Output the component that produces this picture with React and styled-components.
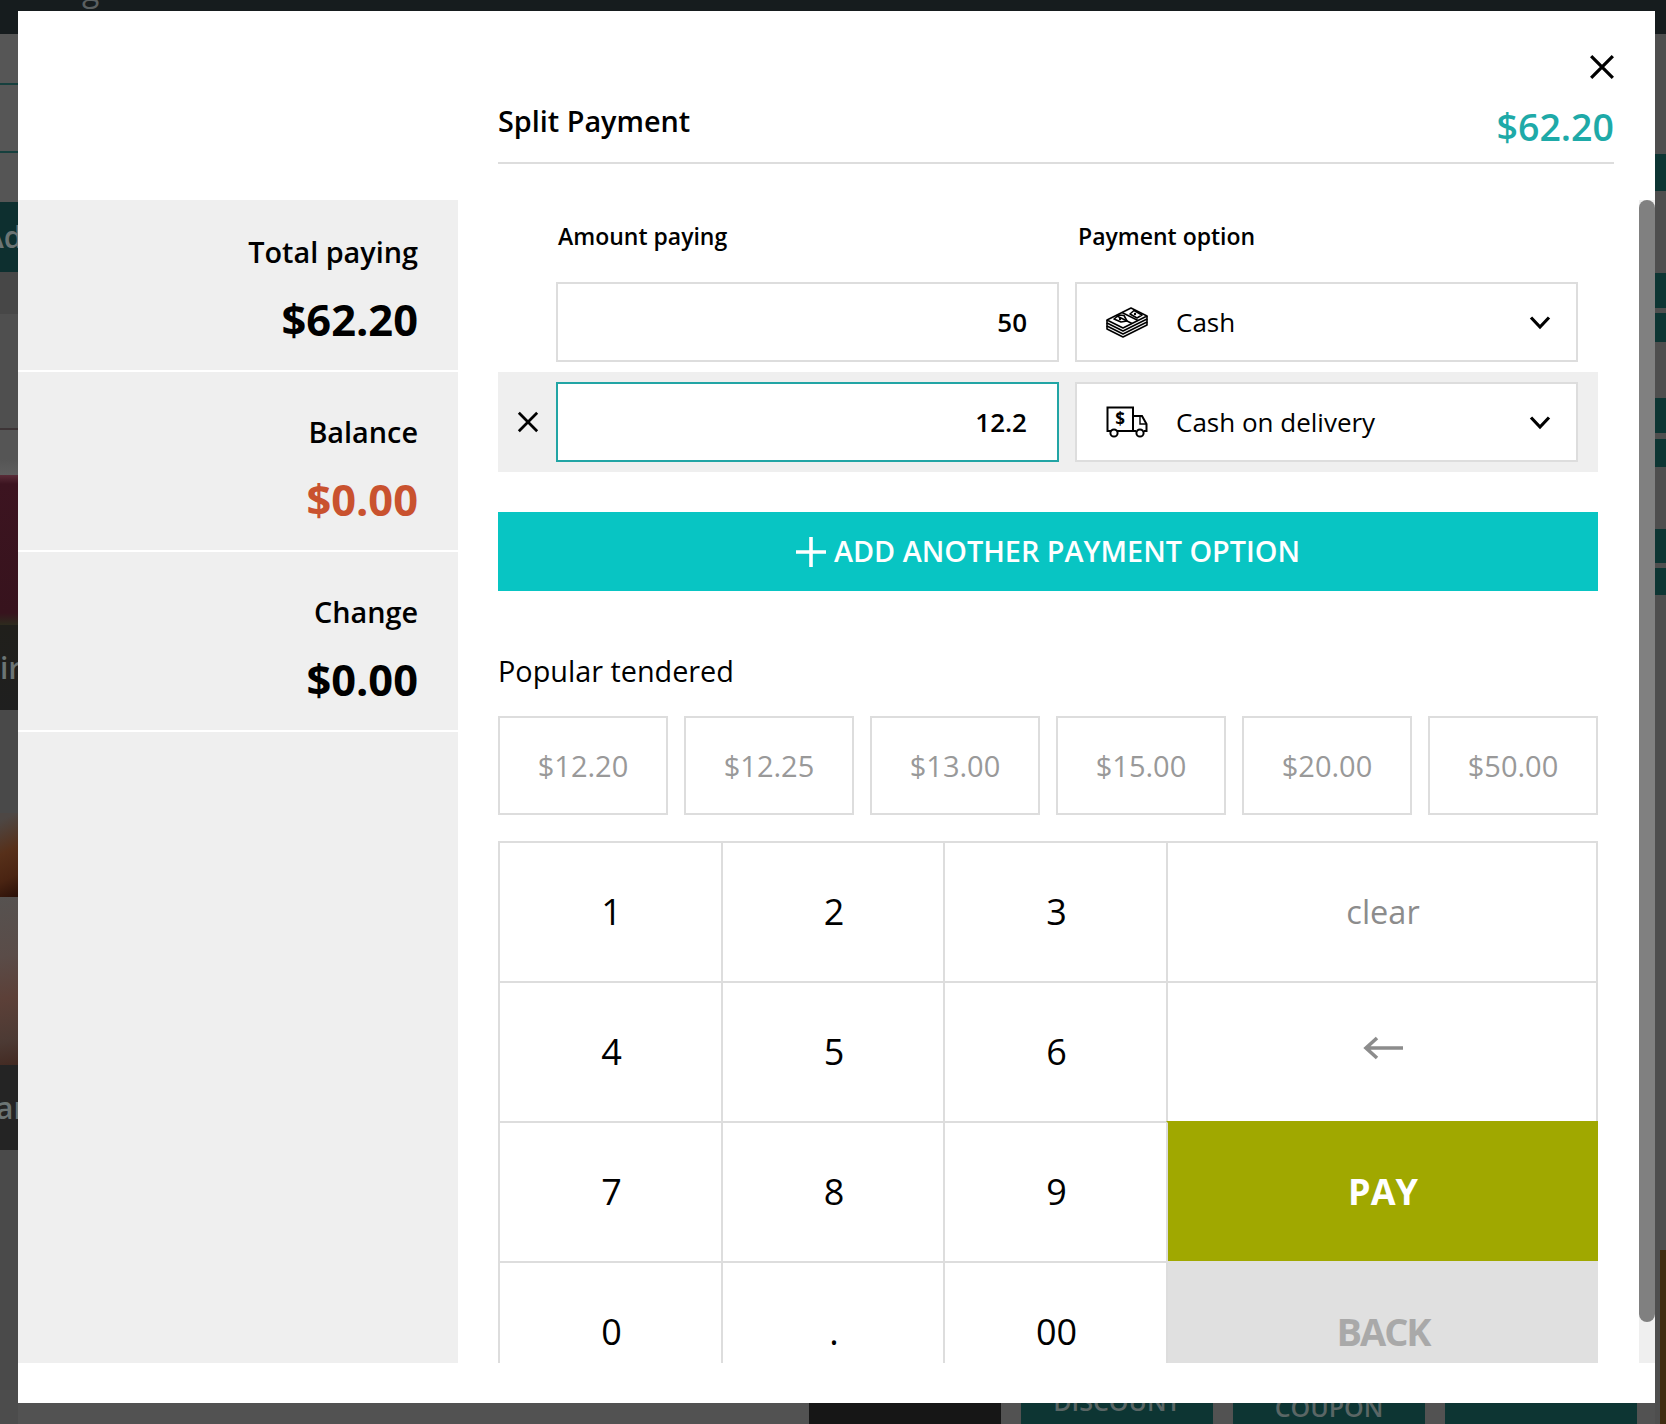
import React from "react";
import styled, { createGlobalStyle } from "styled-components";

const Global = createGlobalStyle`
  html, body { margin: 0; padding: 0; background: #4c4c4c; }
  body { font-family: "Open Sans", "Liberation Sans", sans-serif; color: #000; }
  * { box-sizing: border-box; }
`;

const Page = styled.div`
  position: relative;
  width: 1666px;
  height: 1424px;
  overflow: hidden;
  display: grid;
  grid-template-columns: 18px 1fr 11px;
  grid-template-rows: 34px 1fr 50px;
  background: #4c4c4c;
`;
const TopBar = styled.div`
  grid-column: 1 / -1;
  background: #161c1e;
  overflow: hidden;
  padding-left: 82px;
`;
const TopText = styled.div`
  margin-top: -27px;
  font-size: 32px;
  line-height: 32px;
  color: #5a5f60;
`;
const LeftRail = styled.div`
  grid-column: 1;
  grid-row: 2 / 4;
  display: flex;
  flex-direction: column;
  overflow: hidden;
`;
const RailBlock = styled.div`
  height: ${(p) => p.$h}px;
  flex: none;
  background: ${(p) => p.$bg};
  border-top: ${(p) => (p.$line ? `2px solid ${p.$line}` : "none")};
  color: #6b7474;
  font-size: 30px;
  font-weight: 600;
  line-height: ${(p) => p.$h}px;
  white-space: nowrap;
  text-indent: ${(p) => p.$indent || 0}px;
  overflow: hidden;
`;
const Middle = styled.div`
  grid-column: 2;
  grid-row: 2;
`;
const RightRail = styled.div`
  grid-column: 3;
  grid-row: 2 / 4;
  display: flex;
  flex-direction: column;
  background: #4e4e4e;
`;
const RightStripe = styled.div`
  height: ${(p) => p.$h}px;
  flex: none;
  margin-top: ${(p) => p.$gap}px;
  background: #0d3533;
`;
const Sliver = styled.div`
  flex: 1;
  margin-top: ${(p) => p.$gap}px;
  margin-left: 5px;
  background: #3f2c10;
`;
const BottomBar = styled.div`
  grid-column: 2;
  grid-row: 3;
  display: flex;
  gap: 20px;
  background: #525252;
  padding-left: 791px;
`;
const BottomTile = styled.div`
  width: 192px;
  background: ${(p) => p.$bg};
  color: #5a6665;
  font-size: 25px;
  font-weight: 600;
  line-height: 30px;
  text-align: center;
  padding-top: ${(p) => p.$top}px;
`;

const Modal = styled.div`
  position: absolute;
  left: 18px;
  top: 11px;
  width: 1637px;
  height: 1392px;
  background: #fff;
  display: grid;
  grid-template-columns: 440px 1fr;
`;
const CloseButton = styled.button`
  position: absolute;
  left: 1571px;
  top: 43px;
  width: 26px;
  height: 26px;
  padding: 0;
  border: 0;
  background: none;
  display: flex;
`;
const Summary = styled.aside`
  margin: 189px 0 40px;
  background: #efefef;
  display: flex;
  flex-direction: column;
`;
const SummaryBlock = styled.div`
  height: 180px;
  border-bottom: 2px solid #fff;
  padding: 41px 40px 0 0;
  text-align: right;
  &:first-child { height: 172px; padding-top: 33px; }
`;
const SummaryLabel = styled.div`
  font-size: 28.8px;
  font-weight: 600;
  line-height: 38px;
`;
const SummaryValue = styled.div`
  margin-top: 20px;
  font-size: 43.4px;
  font-weight: 700;
  line-height: 58px;
  color: ${(p) => p.$color || "#000"};
`;
const Pane = styled.section`
  padding-left: 40px;
  display: flex;
  flex-direction: column;
  min-width: 0;
`;
const Header = styled.header`
  width: 1116px;
  height: 153px;
  border-bottom: 2px solid #ddd;
  display: flex;
  justify-content: space-between;
  align-items: flex-end;
  padding-bottom: 7px;
`;
const Title = styled.h1`
  margin: 0 0 15px;
  font-size: 28.8px;
  font-weight: 600;
  line-height: 38px;
`;
const HeaderTotal = styled.div`
  margin-bottom: 3px;
  font-size: 37.5px;
  font-weight: 600;
  line-height: 50px;
  color: #1eaaa8;
`;
const Scroller = styled.div`
  margin-top: 36px;
  height: 1163px;
  display: flex;
  gap: 41px;
  overflow: hidden;
`;
const ScrollContent = styled.div`
  width: 1100px;
  flex: none;
`;
const ScrollTrack = styled.div`
  width: 16px;
  background: #efefef;
`;
const ScrollThumb = styled.div`
  height: 1122px;
  background: #808080;
  border-radius: 8px;
`;
const LabelRow = styled.div`
  height: 72px;
  display: grid;
  grid-template-columns: 503px 504px;
  column-gap: 16px;
  padding: 0 0 0 58px;
  align-items: center;
`;
const FieldLabel = styled.div`
  font-size: 23px;
  font-weight: 600;
  line-height: 72px;
  padding-left: ${(p) => p.$indent}px;
`;
const PayRow = styled.div`
  height: 100px;
  display: grid;
  grid-template-columns: 58px 503px 519px;
  column-gap: 0;
  align-items: center;
  background: ${(p) => (p.$active ? "#efefef" : "transparent")};
`;
const RemoveButton = styled.button`
  width: 58px;
  height: 58px;
  padding: 0 0 0 2px;
  border: 0;
  background: none;
  display: flex;
  align-items: center;
  justify-content: center;
`;
const AmountField = styled.div`
  grid-column: 2;
  height: 80px;
  background: #fff;
  border: 2px solid ${(p) => (p.$focus ? "#22a5a5" : "#ddd")};
  padding-right: 30px;
  display: flex;
  align-items: center;
  justify-content: flex-end;
  font-size: 26px;
  font-weight: 600;
`;
const SelectField = styled.div`
  margin-left: 16px;
  height: 80px;
  background: #fff;
  border: 2px solid #ddd;
  display: flex;
  align-items: center;
  padding: 0 25px 0 29px;
  font-size: 26px;
`;
const SelectIcon = styled.svg`
  width: 42px;
  height: 32px;
  flex: none;
  margin-right: 28px;
`;
const SelectText = styled.span`
  flex: 1;
`;
const AddButton = styled.button`
  display: flex;
  width: 100%;
  height: 79px;
  margin-top: 40px;
  border: 0;
  padding: 0;
  background: #08c5c3;
  color: #fff;
  font: 600 28.8px/1 "Open Sans", sans-serif;
  align-items: center;
  justify-content: center;
  gap: 8px;
`;
const SectionTitle = styled.h2`
  margin: 60px 0 25px;
  font-size: 28.8px;
  font-weight: 400;
  line-height: 40px;
`;
const Chips = styled.div`
  display: grid;
  grid-template-columns: repeat(6, 170px);
  column-gap: 16px;
`;
const Chip = styled.button`
  height: 99px;
  padding: 0;
  background: #fff;
  border: 2px solid #ddd;
  color: #999;
  font: 400 29px/1 "Open Sans", sans-serif;
`;
const Keypad = styled.div`
  margin-top: 26px;
  display: grid;
  grid-template-columns: 223px 222px 223px 432px;
  grid-auto-rows: 140px;
`;
const Key = styled.button`
  padding: 0 0 2px ${(p) => (p.$bg ? 0 : 2)}px;
  background: ${(p) => p.$bg || "#fff"};
  background-clip: padding-box;
  border: 0;
  border-top: 2px solid ${(p) => p.$bg || "#ddd"};
  border-left: 2px solid #ddd;
  border-right: ${(p) => (p.$end ? "2px solid #ddd" : "0")};
  color: ${(p) => p.$color || "#000"};
  font-family: "Open Sans", sans-serif;
  font-size: ${(p) => p.$size || 36}px;
  font-weight: ${(p) => p.$weight || 400};
  letter-spacing: ${(p) => p.$track || 0}px;
  display: flex;
  align-items: center;
  justify-content: center;
`;
const BackArrow = styled.svg`
  margin-bottom: 6px;
`;

const Cross = ({ size, w = 2.4 }) => (
  <svg width={size} height={size} viewBox="0 0 24 24" fill="none" stroke="#000" strokeWidth={w}>
    <path d="M2 2 L22 22 M22 2 L2 22" />
  </svg>
);
const Chevron = () => (
  <svg width="22" height="15" viewBox="0 0 22 15" fill="none" stroke="#000" strokeWidth="3.2">
    <path d="M2 2.5 L11 12 L20 2.5" />
  </svg>
);
const MoneyIcon = () => (
  <SelectIcon viewBox="0 0 42 32" fill="none" stroke="#000" strokeWidth="1.6" strokeLinejoin="round">
    <path d="M1 14 L25 2 L41 10 L17 22 Z" fill="#fff" />
    <path d="M1 14 V17 L17 25 L41 13 V10" />
    <path d="M1 17 V20 L17 28 L41 16 V13" />
    <path d="M1 20 V23 L17 31 L41 19 V16" />
    <path d="M10 9.5 L26 17.5 M16 6.5 L32 14.5" strokeWidth="1.4" />
    <path d="M13 9 L18 9.5 L21 15 L15 16 L8 13 Z" />
    <path d="M28 4.5 L36 9 L31 12 L24 8 Z" />
    <circle cx="14" cy="13" r="1.2" fill="#000" stroke="none" />
    <circle cx="29" cy="8" r="1.2" fill="#000" stroke="none" />
  </SelectIcon>
);
const TruckIcon = () => (
  <SelectIcon viewBox="0 0 42 32" fill="none" stroke="#000" strokeWidth="2">
    <path d="M5 25 H1.5 V1.5 H27 V25 H11" />
    <path d="M27 10 H36 L40.5 18 V25 H38" />
    <path d="M30 25 H27" />
    <path d="M34 10 L34 18 H40.5" strokeWidth="1.4" />
    <circle cx="8" cy="27" r="3.6" />
    <circle cx="34" cy="27" r="3.6" />
    <text x="14" y="19" fontSize="17" fontWeight="700" fontFamily="Open Sans" textAnchor="middle" fill="#000" stroke="none">$</text>
  </SelectIcon>
);

const summary = [
  { label: "Total paying", value: "$62.20" },
  { label: "Balance", value: "$0.00", color: "#c9522f" },
  { label: "Change", value: "$0.00" },
];
const tendered = ["$12.20", "$12.25", "$13.00", "$15.00", "$20.00", "$50.00"];
const digits = [["1", "2", "3"], ["4", "5", "6"], ["7", "8", "9"], ["0", ".", "00"]];

const leftRail = [
  { h: 49, bg: "#565656" },
  { h: 68, bg: "#565656", line: "#16403e" },
  { h: 51, bg: "#555555", line: "#16403e" },
  { h: 70, bg: "#0d2f2f", text: "Ad", indent: -16 },
  { h: 42, bg: "#474747" },
  { h: 161, bg: "linear-gradient(#4f4f4f 0 71%, #3d3436 71% 72%, #555 72% 90%, #5e5e5e)" },
  { h: 150, bg: "linear-gradient(#5a2c38, #3c1420 6%, #37131d 92%, #2d2b1e)" },
  { h: 85, bg: "linear-gradient(#201f1b, #1f1f1f)", text: "ir", indent: 0 },
  { h: 103, bg: "#494949" },
  { h: 84, bg: "linear-gradient(155deg, #4d4744 8%, #57301a 45%, #4a2412 75%, #2a1008)" },
  { h: 168, bg: "linear-gradient(170deg, #565250, #5a4c48 35%, #5c4038 60%, #4c3a34 85%, #432a22)" },
  { h: 85, bg: "#242424", text: "ar", indent: -4 },
  { h: 240, bg: "#4a4a4a" },
];
const stripes = [
  { top: 120, h: 37 },
  { top: 82, h: 35 },
  { top: 5, h: 29 },
  { top: 56, h: 35 },
  { top: 6, h: 28 },
  { top: 62, h: 34 },
  { top: 5, h: 27 },
];

export default function App() {
  return (
    <Page>
      <Global />
      <TopBar>
        <TopText>g</TopText>
      </TopBar>
      <LeftRail>
        {leftRail.map((b, i) => (
          <RailBlock key={i} $h={b.h} $bg={b.bg} $line={b.line} $indent={b.indent}>
            {b.text}
          </RailBlock>
        ))}
      </LeftRail>
      <Middle />
      <RightRail>
        {stripes.map((s, i) => (
          <RightStripe key={i} $gap={s.top} $h={s.h} />
        ))}
        <Sliver $gap={655} />
      </RightRail>
      <BottomBar>
        <BottomTile $bg="#161616" />
        <BottomTile $bg="#0d3533" $top={12}>DISCOUNT</BottomTile>
        <BottomTile $bg="#0d3533" $top={18}>COUPON</BottomTile>
        <BottomTile $bg="#0d3533" />
      </BottomBar>

      <Modal>
        <CloseButton aria-label="Close">
          <Cross size={26} w={3} />
        </CloseButton>
        <Summary>
          {summary.map((s) => (
            <SummaryBlock key={s.label}>
              <SummaryLabel>{s.label}</SummaryLabel>
              <SummaryValue $color={s.color}>{s.value}</SummaryValue>
            </SummaryBlock>
          ))}
        </Summary>
        <Pane>
          <Header>
            <Title>Split Payment</Title>
            <HeaderTotal>$62.20</HeaderTotal>
          </Header>
          <Scroller>
            <ScrollContent>
              <LabelRow>
                <FieldLabel $indent={2}>Amount paying</FieldLabel>
                <FieldLabel $indent={3}>Payment option</FieldLabel>
              </LabelRow>
              <PayRow>
                <AmountField>50</AmountField>
                <SelectField>
                  <MoneyIcon />
                  <SelectText>Cash</SelectText>
                  <Chevron />
                </SelectField>
              </PayRow>
              <PayRow $active>
                <RemoveButton aria-label="Remove">
                  <Cross size={22} w={3} />
                </RemoveButton>
                <AmountField $focus>12.2</AmountField>
                <SelectField>
                  <TruckIcon />
                  <SelectText>Cash on delivery</SelectText>
                  <Chevron />
                </SelectField>
              </PayRow>
              <AddButton>
                <svg width="30" height="30" viewBox="0 0 30 30" stroke="#fff" strokeWidth="3.6">
                  <path d="M15 0 V30 M0 15 H30" />
                </svg>
                ADD ANOTHER PAYMENT OPTION
              </AddButton>
              <SectionTitle>Popular tendered</SectionTitle>
              <Chips>
                {tendered.map((t) => (
                  <Chip key={t}>{t}</Chip>
                ))}
              </Chips>
              <Keypad>
                {digits[0].map((d) => <Key key={d}>{d}</Key>)}
                <Key $end $color="#8c8c8c" $size={32.5}>clear</Key>
                {digits[1].map((d) => <Key key={d}>{d}</Key>)}
                <Key $end aria-label="Backspace">
                  <BackArrow width="42" height="26" viewBox="0 0 42 26" fill="none" stroke="#8c8c8c" strokeWidth="3.6">
                    <path d="M41 13 H4 M15 3 L4 13 L15 23" />
                  </BackArrow>
                </Key>
                {digits[2].map((d) => <Key key={d}>{d}</Key>)}
                <Key $bg="#a0a800" $color="#fff" $weight={700}>PAY</Key>
                {digits[3].map((d) => <Key key={d}>{d}</Key>)}
                <Key $bg="#e0e0e0" $color="#a9a9a9" $weight={700} $size={38} $track={-2}>BACK</Key>
              </Keypad>
            </ScrollContent>
            <ScrollTrack>
              <ScrollThumb />
            </ScrollTrack>
          </Scroller>
        </Pane>
      </Modal>
    </Page>
  );
}
